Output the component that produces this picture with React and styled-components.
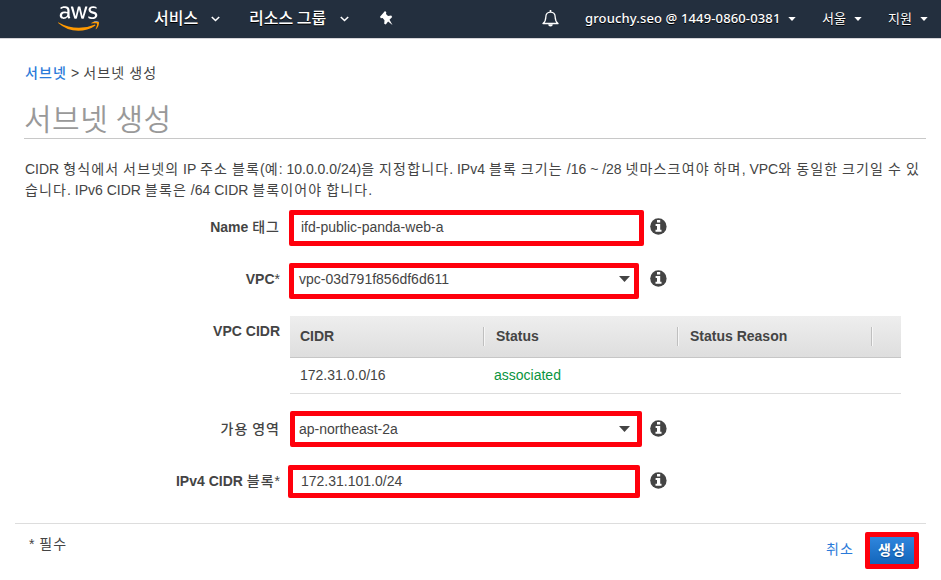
import React from "react";
import styled, { createGlobalStyle } from "styled-components";
import { FaAws } from "react-icons/fa";

const Global = createGlobalStyle`
  * { box-sizing: border-box; }
  body { margin: 0; background: #fff; color: #444; overflow: hidden;
    font: 14px/20px "Liberation Sans", "Noto Sans CJK KR", sans-serif; }
`;
const Nav = styled.header`
  height: 39px; padding-left: 58px; display: flex; align-items: center;
  background: #232f3e; border-bottom: 1px solid #d5d4d8; color: #fff;
  font-family: "Noto Sans CJK KR", sans-serif; white-space: nowrap;
`;
const Logo = styled.div`
  width: 96px; height: 35px; flex: none;
  svg { display: block; width: 41px; height: 33px; }
  svg path { fill: url(#aws-fill); }
`;
const Defs = styled.svg`position: absolute; width: 0; height: 0;`;
const NavItem = styled.div`
  flex: none; width: ${p => p.$w}px; display: flex; align-items: center;
  font-size: ${p => p.$size || 13}px; font-weight: ${p => p.$weight || 400};
  line-height: 20px; padding-bottom: ${p => p.$lift || 0}px;
  text-shadow: 0 1px 0 #000;
  svg { margin-left: auto; margin-right: ${p => p.$after}px; margin-top: ${p => 2 * (p.$drop || 0)}px; }
`;
const Account = styled.span`
  font: 500 13px/20px "Noto Sans", sans-serif; letter-spacing: 0.14px;
`;
const Main = styled.main`padding: 24px 15px 0;`;
const Crumbs = styled.nav`
  height: 20px; padding-left: 10px; display: flex; gap: 4px; align-items: center;
`;
const CrumbLink = styled.a`color: #2a7ad9; font-weight: 500;`;
const Title = styled.h1`
  margin: 13px 0 0 9px; padding-left: 0; height: 43px; border-bottom: 1px solid #c8c8c8;
  font: 350 30px/43px "Noto Sans CJK KR", sans-serif; letter-spacing: 0.5px; color: #999;
`;
const Intro = styled.p`
  margin: 20px 0 0 10px; height: 51px; line-height: 21px; white-space: nowrap;
`;
const Line = styled.span`display: block;`;
const HangulRun = styled.span`letter-spacing: 1.14px;`;
const Row = styled.div`
  display: flex; align-items: flex-start; height: ${p => p.$h}px;
`;
const Label = styled.div`
  width: 265px; flex: none; text-align: right; font-weight: 700; white-space: pre;
  margin-top: ${p => p.$top}px;
  ${HangulRun} { font-weight: 500; letter-spacing: 1px; }
`;
const Mark = styled.span`font-weight: 400;`;
const Field = styled.div`
  flex: none; display: flex; align-items: center; justify-content: space-between;
  width: ${p => p.$w}px; height: ${p => p.$h || 36}px; margin-left: ${p => p.$left}px;
  padding: 0 ${p => p.$end || 7}px ${p => p.$lift || 0}px ${p => p.$pad}px;
  border: 5px solid #ff000c; border-radius: 2px; background: #fff;
`;
const Info = styled.div`
  margin-left: ${p => p.$left}px; margin-top: ${p => p.$top}px; height: 17px;
  svg { display: block; }
`;
const Table = styled.div`width: 611px; margin-left: 10px;`;
const THead = styled.div`
  height: 42px; display: flex; align-items: flex-start; padding-top: 11px; font-weight: 700;
  background: linear-gradient(#eee, #dedede); border-bottom: 1px solid #c6c6c6;
  line-height: 18px;
`;
const Th = styled.div`
  width: 194px; height: 19px; padding-left: ${p => p.$pad}px;
  border-right: 1px solid #bfbfbf; box-shadow: 1px 0 0 #f6f6f6;
`;
const TRow = styled.div`
  height: 36px; display: flex; align-items: center; padding-bottom: 2px; border-bottom: 1px solid #ddd;
`;
const Td = styled.div`
  width: 194px; padding-left: 10px; color: ${p => p.$color || "#444"};
`;
const Footer = styled.footer`
  border-top: 1px solid #ddd; display: flex; align-items: flex-start; width: 911px;
`;
const Required = styled.div`margin: 10px auto 0 14px; word-spacing: 1px;`;
const Cancel = styled.a`color: #2a7ad9; margin: 15px 11px 0 0;`;
const Create = styled.button`
  width: 54px; height: 37px; margin: 8px 7px 0 0; padding: 0 0 4px; border: 5px solid #ff000c;
  border-radius: 2px; background: linear-gradient(#2f86dd, #1366bb) padding-box;
  color: #fff; font: 700 14px/20px "Noto Sans CJK KR", sans-serif; text-shadow: 0 1px 1px #0a4a91;
`;

const Text = ({ children }) =>
  children.split(/([\uac00-\ud7a3]+)/).map((part, i) =>
    i % 2 ? <HangulRun key={i}>{part}</HangulRun> : part
  );

const Chevron = () => (
  <svg width="9" height="6" viewBox="0 0 9 6"><path d="M.8 1 4.5 4.5 8.2 1" fill="none" stroke="#fff" strokeWidth="1.6" /></svg>
);
const Caret = () => (
  <svg width="8" height="4" viewBox="0 0 8 4"><path d="M.3 0h7.400L4 4z" fill="#fff" /></svg>
);
const SelectArrow = () => (
  <svg width="11" height="6" viewBox="0 0 11 6"><path d="M0 0h11L5.5 6z" fill="#444" /></svg>
);
const InfoIcon = () => (
  <svg width="17" height="17" viewBox="0 0 17 17">
    <circle cx="8.400" cy="8.500" r="8.200" fill="#444" />
    <path d="M7 2h3.200v2.600H7zM5.600 6h4.600v5.700h1.300v2H5.500v-2H7V8H5.600z" fill="#fff" />
  </svg>
);
const Pin = () => (
  <svg width="13" height="15" viewBox="0 0 13 15">
    <path d="M5 0 6.300 1.300 6 3 8 5l3.200-.6L12.200 6 9.500 8.800l3 5.200-4.400-3.600-2.300 3.200-1.600-.8.300-3.600L2.600 7 .8 7.200 0 5.800z" fill="#fff" />
  </svg>
);
const Bell = () => (
  <svg width="17" height="17" viewBox="0 0 17 17">
    <path d="M1 13.500c2-1.700 2.800-3.200 2.800-6.300 0-3 1.700-5.100 4.700-5.100s4.700 2.100 4.700 5.100c0 3.100.8 4.600 2.800 6.300z" fill="none" stroke="#fff" strokeWidth="1.300" strokeLinejoin="round" />
    <path d="M8.500 0v2" stroke="#fff" strokeWidth="1.600" />
    <path d="M6.200 14.300h4.600a2.300 2.300 0 0 1-4.600 0z" fill="#fff" />
  </svg>
);

export default function App() {
  return (
    <>
      <Global />
      <Nav>
        <Defs><defs><linearGradient id="aws-fill" gradientUnits="userSpaceOnUse" x1="0" y1="0" x2="0" y2="512">
          <stop offset="0.6" stopColor="#fff" /><stop offset="0.6" stopColor="#f90" />
        </linearGradient></defs></Defs>
        <Logo><FaAws /></Logo>
        <NavItem $w={95} $size={16} $weight={500} $lift={4} $after={29} $drop={2}>서비스<Chevron /></NavItem>
        <NavItem $w={131} $size={16} $weight={500} $lift={4} $after={31} $drop={2}>리소스 그룹<Chevron /></NavItem>
        <NavItem $w={161} $lift={1} $after={148}><Pin /></NavItem>
        <NavItem $w={44} $after={26} $lift={1}><Bell /></NavItem>
        <NavItem $w={237} $lift={3} $after={26} $drop={1}><Account>grouchy.seo @ 1449-0860-0381</Account><Caret /></NavItem>
        <NavItem $w={66} $lift={3} $after={26} $drop={1}>서울<Caret /></NavItem>
        <NavItem $w={53} $lift={3} $after={13} $drop={1}>지원<Caret /></NavItem>
      </Nav>
      <Main>
        <Crumbs>
          <CrumbLink><Text>서브넷</Text></CrumbLink><span>&gt;</span><span><Text>서브넷 생성</Text></span>
        </Crumbs>
        <Title>서브넷 생성</Title>
        <Intro>
          <Line><Text>CIDR 형식에서 서브넷의 IP 주소 블록(예: 10.0.0.0/24)을 지정합니다. IPv4 블록 크기는 /16 ~ /28 넷마스크여야 하며, VPC와 동일한 크기일 수 있</Text></Line>
          <Line><Text>습니다. IPv6 CIDR 블록은 /64 CIDR 블록이어야 합니다.</Text></Line>
        </Intro>
        <Row $h={53}>
          <Label $top={7}><Text>Name 태그</Text></Label>
          <Field $w={355} $left={9} $pad={7} $lift={2}>ifd-public-panda-web-a</Field>
          <Info $left={6} $top={8}><InfoIcon /></Info>
        </Row>
        <Row $h={53}>
          <Label $top={6}>VPC<Mark>*</Mark></Label>
          <Field $w={350} $left={9} $pad={5} $end={4} $lift={4}>vpc-03d791f856df6d611<SelectArrow /></Field>
          <Info $left={11} $top={7}><InfoIcon /></Info>
        </Row>
        <Row $h={95}>
          <Label $top={5}>VPC CIDR</Label>
          <Table>
            <THead><Th $pad={10}>CIDR</Th><Th $pad={12}>Status</Th><Th $pad={12}>Status Reason</Th></THead>
            <TRow><Td>172.31.0.0/16</Td><Td $color="#0a9440">associated</Td></TRow>
          </Table>
        </Row>
        <Row $h={54}>
          <Label $top={8}><Text>가용 영역</Text></Label>
          <Field $w={352} $left={10} $pad={4}>ap-northeast-2a<SelectArrow /></Field>
          <Info $left={8} $top={9}><InfoIcon /></Info>
        </Row>
        <Row $h={58}>
          <Label $top={6}><Text>IPv4 CIDR 블록</Text><Mark>*</Mark></Label>
          <Field $w={352} $h={33} $left={8} $pad={8} $lift={2}>172.31.101.0/24</Field>
          <Info $left={10} $top={7}><InfoIcon /></Info>
        </Row>
        <Footer>
          <Required><Text>* 필수</Text></Required>
          <Cancel><Text>취소</Text></Cancel>
          <Create><Text>생성</Text></Create>
        </Footer>
      </Main>
    </>
  );
}
